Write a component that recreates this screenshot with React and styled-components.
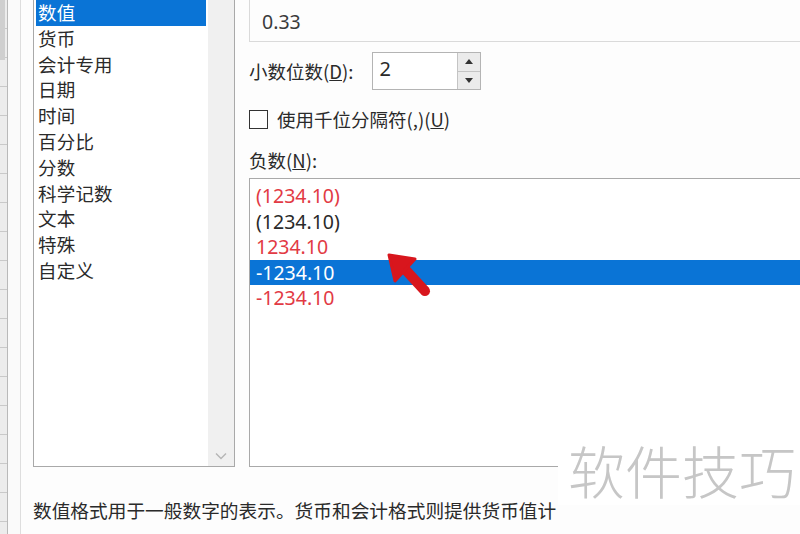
import React from "react";
import styled, { createGlobalStyle } from "styled-components";

const Global = createGlobalStyle`
  html, body { margin: 0; padding: 0; background: #fff; }
  body { width: 800px; height: 534px; overflow: hidden; }
  #root { width: 800px; height: 534px; }
`;

const Page = styled.div`
  position: relative;
  display: flex;
  width: 800px;
  height: 534px;
  overflow: hidden;
  background: #fdfdfd;
  font-family: "Noto Sans CJK SC", "Noto Sans", sans-serif;
  color: #2a2a2a;
`;

const Sheet = styled.div`
  display: flex;
  flex: 0 0 auto;
  height: 100%;
`;

const SheetCells = styled.div`
  width: 7px;
  height: 100%;
  background:
    linear-gradient(#cfcfcf, #cfcfcf) 0 0 / 5px 60px no-repeat,
    repeating-linear-gradient(to bottom, #ececec 0 28px, #c9c9c9 28px 29px);
  border-right: 1px solid #b9b9b9;
`;

const SheetGap = styled.div`
  width: 12px;
  height: 100%;
  background: #fafafa;
  border-right: 1px solid #dedede;
`;

const Dialog = styled.div`
  flex: 1;
  display: flex;
  flex-direction: column;
  padding-left: 12px;
  min-width: 0;
`;

const MainRow = styled.div`
  display: flex;
  gap: 14px;
  margin-top: -3px;
  height: 470px;
`;

const CategoryBox = styled.div`
  flex: 0 0 auto;
  width: 200px;
  display: flex;
  border: 1px solid #a9a9a9;
  background: #fff;
`;

const CategoryItems = styled.div`
  flex: 1;
  padding: 2px 2px 0 2px;
`;

const CategoryItem = styled.div`
  height: 25.8px;
  line-height: 25.8px;
  padding-left: 2px;
  font-size: 18.5px;
  letter-spacing: 0.2px;
  color: ${(p) => (p.$selected ? "#fff" : "#2a2a2a")};
  background: ${(p) => (p.$selected ? "#0a74d6" : "transparent")};
`;

const ScrollTrack = styled.div`
  width: 26px;
  background: #f0f0f0;
  display: flex;
  flex-direction: column;
  justify-content: flex-end;
  align-items: center;
  padding-bottom: 6px;
`;

const Chevron = styled.svg`
  width: 12px;
  height: 8px;
`;

const RightPanel = styled.div`
  flex: 1;
  display: flex;
  flex-direction: column;
  min-width: 0;
  margin-right: -40px;
`;

const SampleBox = styled.div`
  height: 45px;
  border: 1px solid #dadada;
  border-top: none;
  display: flex;
  align-items: flex-end;
  padding: 0 0 6px 12px;
  box-sizing: border-box;
  font-family: "Noto Sans", "Noto Sans CJK SC", sans-serif;
  font-size: 19.5px;
  color: #3a3a3a;
`;

const FieldRow = styled.div`
  display: flex;
  align-items: center;
  margin-top: ${(p) => p.$top}px;
  font-size: 18px;
`;

const Label = styled.span`
  font-size: 18.5px;
  color: #2a2a2a;
  white-space: nowrap;
`;

const Key = styled.span`
  text-decoration: underline;
`;

const Spin = styled.div`
  display: flex;
  height: 38px;
  margin-left: 19px;
  border: 1px solid #b4b4b4;
  background: #fff;
  box-sizing: border-box;
`;

const SpinInput = styled.div`
  width: 78px;
  padding-left: 6px;
  font-family: "Noto Sans", sans-serif;
  font-size: 20px;
  line-height: 32px;
  color: #2a2a2a;
`;

const SpinButtons = styled.div`
  width: 22px;
  display: flex;
  flex-direction: column;
  border-left: 1px solid #c4c4c4;
`;

const SpinButton = styled.div`
  flex: 1;
  display: flex;
  align-items: center;
  justify-content: center;
  background: #ebebeb;
  & + & {
    border-top: 1px solid #c4c4c4;
  }
`;

const Check = styled.div`
  width: 17px;
  height: 17px;
  border: 1px solid #333;
  background: #fff;
  margin-right: 9px;
`;

const NegList = styled.div`
  position: relative;
  flex: 1;
  margin-top: 5px;
  border: 1px solid #a9a9a9;
  border-right: none;
  background: #fff;
  padding-top: 4px;
`;

const NegItem = styled.div`
  height: 25.6px;
  line-height: 25.6px;
  padding-left: 6px;
  font-family: "Noto Sans", sans-serif;
  font-size: 19.5px;
  color: ${(p) => (p.$selected ? "#fff" : p.$red ? "#e23a44" : "#2a2a2a")};
  background: ${(p) => (p.$selected ? "#0a74d6" : "transparent")};
`;

const Arrow = styled.svg`
  position: absolute;
  left: 133px;
  top: 66px;
  width: 50px;
  height: 50px;
  overflow: visible;
`;

const Description = styled.div`
  margin-top: 29px;
  font-size: 18.7px;
  color: #2a2a2a;
  white-space: nowrap;
`;

const Watermark = styled.div`
  position: absolute;
  right: 0;
  top: 433px;
  padding: 0 4px 0 10px;
  background: #fff;
  font-family: "Noto Sans CJK SC", sans-serif;
  font-weight: 300;
  font-size: 57px;
  line-height: 72px;
  color: #c6c6c6;
`;

const categories = [
  "数值",
  "货币",
  "会计专用",
  "日期",
  "时间",
  "百分比",
  "分数",
  "科学记数",
  "文本",
  "特殊",
  "自定义",
];

const negatives = [
  { text: "(1234.10)", red: true },
  { text: "(1234.10)" },
  { text: "1234.10", red: true },
  { text: "-1234.10", selected: true },
  { text: "-1234.10", red: true },
];

export default function App() {
  return (
    <>
      <Global />
      <Page>
        <Sheet>
          <SheetCells />
          <SheetGap />
        </Sheet>
        <Dialog>
          <MainRow>
            <CategoryBox>
              <CategoryItems>
                {categories.map((c, i) => (
                  <CategoryItem key={c} $selected={i === 0}>
                    {c}
                  </CategoryItem>
                ))}
              </CategoryItems>
              <ScrollTrack>
                <Chevron viewBox="0 0 12 8">
                  <path d="M1 1.5 L6 6.5 L11 1.5" fill="none" stroke="#b5b5b5" strokeWidth="1.4" />
                </Chevron>
              </ScrollTrack>
            </CategoryBox>
            <RightPanel>
              <SampleBox>0.33</SampleBox>
              <FieldRow $top={10}>
                <Label>
                  小数位数(<Key>D</Key>):
                </Label>
                <Spin>
                  <SpinInput>2</SpinInput>
                  <SpinButtons>
                    <SpinButton>
                      <svg width="8" height="5" viewBox="0 0 8 5">
                        <path d="M0 5 L4 0 L8 5 Z" fill="#333" />
                      </svg>
                    </SpinButton>
                    <SpinButton>
                      <svg width="8" height="5" viewBox="0 0 8 5">
                        <path d="M0 0 L4 5 L8 0 Z" fill="#333" />
                      </svg>
                    </SpinButton>
                  </SpinButtons>
                </Spin>
              </FieldRow>
              <FieldRow $top={16}>
                <Check />
                <Label>
                  使用千位分隔符(,)(<Key>U</Key>)
                </Label>
              </FieldRow>
              <FieldRow $top={15}>
                <Label>
                  负数(<Key>N</Key>):
                </Label>
              </FieldRow>
              <NegList>
                {negatives.map((n, i) => (
                  <NegItem key={i} $red={n.red} $selected={n.selected}>
                    {n.text}
                  </NegItem>
                ))}
                <Arrow viewBox="0 0 50 50">
                  <line x1="20" y1="22" x2="42" y2="46" stroke="#d8161d" strokeWidth="10" strokeLinecap="round" />
                  <polygon points="6,10 32,14 12,36" fill="#d8161d" stroke="#d8161d" strokeWidth="3" strokeLinejoin="round" />
                </Arrow>
              </NegList>
            </RightPanel>
          </MainRow>
          <Description>数值格式用于一般数字的表示。货币和会计格式则提供货币值计</Description>
        </Dialog>
        <Watermark>软件技巧</Watermark>
      </Page>
    </>
  );
}
